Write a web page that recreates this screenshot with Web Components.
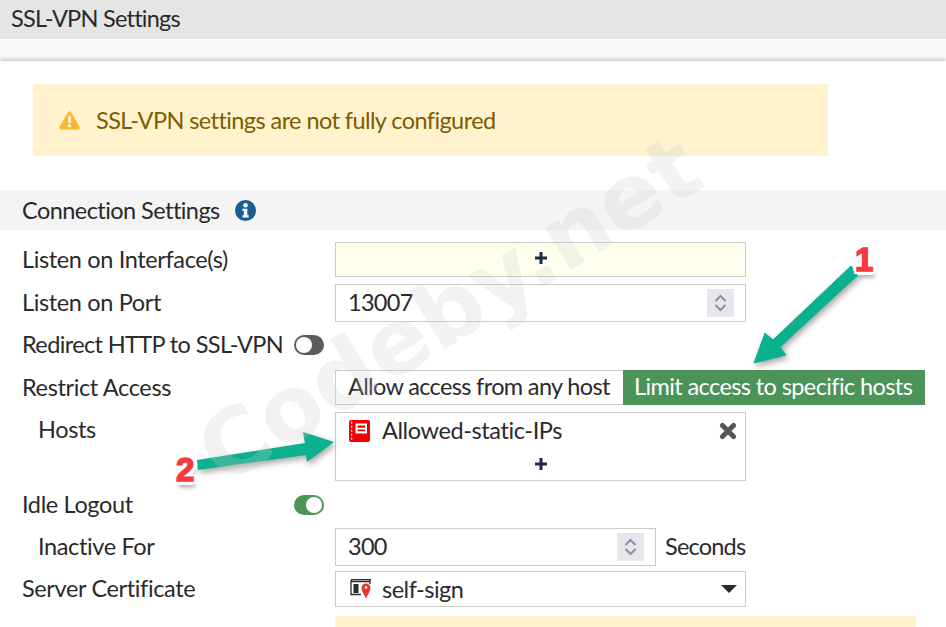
<!DOCTYPE html>
<html>
<head>
<meta charset="utf-8">
<title>SSL-VPN Settings</title>
<style>
    html, body { margin: 0; padding: 0; background: #fff; }
    body {
        width: 946px; height: 627px; overflow: hidden; position: relative;
        font: 23.5px/1.2 Lato, "Liberation Sans", sans-serif; color: #2a2a2a;
        letter-spacing: -0.55px;
    }
</style>
</head>
<body>
<title-bar>SSL-VPN Settings</title-bar>
<settings-panel>
    <warning-box>SSL-VPN settings are not fully configured</warning-box>
    <section-header>Connection Settings</section-header>

    <form-row label="Listen on Interface(s)" top="12" height="35"><entry-field empty></entry-field></form-row>
    <form-row label="Listen on Port" top="7" height="38"><number-field value="13007"></number-field></form-row>
    <form-row label="Redirect HTTP to SSL-VPN" tight top="5" height="36"><toggle-switch slot="aside"></toggle-switch></form-row>
    <form-row label="Restrict Access" top="7" height="35"><segment-buttons></segment-buttons></form-row>
    <form-row label="Hosts" top="7" height="69" indent align="start"><entry-field name="Allowed-static-IPs"></entry-field></form-row>
    <form-row label="Idle Logout" top="7" height="34"><toggle-switch slot="aside" on></toggle-switch></form-row>
    <form-row label="Inactive For" top="6" height="38" indent><number-field value="300" width="321" unit="Seconds"></number-field></form-row>
    <form-row label="Server Certificate" top="5" height="36"><select-field>self-sign</select-field></form-row>
    <form-row top="9" height="30"><notice-strip></notice-strip></form-row>
</settings-panel>
<image-marks></image-marks>

<script>
// Barra gris del título
class TitleBar extends HTMLElement {
    constructor() {
        super();
        this.attachShadow({ mode: 'open' });
        this.shadowRoot.innerHTML = `
            <style>
                :host {
                    display: flex; align-items: center; height: 37px; padding: 0 0 2px 11px;
                    background: #e5e5e5; color: #2a2a2a; letter-spacing: -0.74px;
                }
            </style>
            <slot></slot>
        `;
    }
}

// Panel blanco con la sombra superior
class SettingsPanel extends HTMLElement {
    constructor() {
        super();
        this.attachShadow({ mode: 'open' });
        this.shadowRoot.innerHTML = `
            <style>
                :host {
                    display: block; padding-top: 22px;
                    background: #fafafa;
                }
                .sheet {
                    display: flex; flex-direction: column; padding-top: 23px; background: #fff;
                    box-shadow: 0 -2px 4px rgba(0,0,0,.2);
                }
                ::slotted(*) { flex: none; }
            </style>
            <div class="sheet"><slot></slot></div>
        `;
    }
}

class WarningBox extends HTMLElement {
    constructor() {
        super();
        this.attachShadow({ mode: 'open' });
        this.shadowRoot.innerHTML = `
            <style>
                :host {
                    display: flex; align-items: center; gap: 16px; width: 795px; height: 72px;
                    margin-left: 33px; padding-left: 26px; box-sizing: border-box;
                    background: #fff2cc; color: #7b5d00; letter-spacing: -0.58px;
                }
                svg { width: 21px; height: 20px; flex: none; }
            </style>
            <svg viewBox="0 0 21 20">
                <path fill="#f8b932" d="M10.500 1.200c.7 0 1.200.4 1.600 1l8.400 14.600c.7 1.200-.1 2.700-1.600 2.700H2.100C.6 19.500-.2 18 .5 16.800L8.900 2.200c.4-.6.900-1 1.600-1z"/>
                <rect x="9.100" y="6" width="2.800" height="6.800" fill="#fff2cc"/>
                <rect x="9.100" y="14.300" width="2.800" height="2.800" fill="#fff2cc"/>
            </svg>
            <slot></slot>
        `;
    }
}

class SectionHeader extends HTMLElement {
    constructor() {
        super();
        this.attachShadow({ mode: 'open' });
        this.shadowRoot.innerHTML = `
            <style>
                :host {
                    display: flex; align-items: center; gap: 15px; height: 40px; margin-top: 34px;
                    padding-left: 22px; background: #f4f4f4; letter-spacing: -0.55px;
                }
                svg { width: 21px; height: 21px; flex: none; }
            </style>
            <slot></slot>
            <svg viewBox="0 0 21 21">
                <circle cx="10.500" cy="10.500" r="10.500" fill="#1b5f92"/>
                <circle cx="10.500" cy="5.300" r="2.300" fill="#fff"/>
                <path fill="#fff" d="M7.500 8.800h4.800v6.400h1.400v2.200H7.500v-2.200h1.400v-4.200H7.500z"/>
            </svg>
        `;
    }
}

// Fila del formulario: etiqueta a la izquierda, control en un slot
class FormRow extends HTMLElement {
    constructor() {
        super();
        this.attachShadow({ mode: 'open' });
    }

    connectedCallback() {
        const indent = this.hasAttribute('indent');
        const start = this.getAttribute('align') === 'start';
        const height = Number(this.getAttribute('height') || 35);
        const lift = height % 2 === 0 ? 2 : 0;
        this.shadowRoot.innerHTML = `
            <style>
                :host {
                    display: grid; grid-template-columns: 335px 1fr; align-items: center;
                    margin-top: ${this.getAttribute('top') || 0}px;
                    height: ${height}px;
                }
                .label {
                    display: flex; align-items: center; justify-content: space-between;
                    padding: ${start ? 3 : 0}px 11px ${lift}px ${indent ? 38 : 22}px; white-space: nowrap;
                    align-self: ${start ? 'start' : 'center'};
                    letter-spacing: ${this.hasAttribute('tight') ? -0.62 : -0.36}px;
                }
                ::slotted([slot=aside]) { margin-top: ${lift}px; }
                .control { display: flex; height: 100%; align-items: center; min-width: 0; }
            </style>
            <div class="label"><span>${this.getAttribute('label') || ''}</span><slot name="aside"></slot></div>
            <div class="control"><slot></slot></div>
        `;
    }
}

class ToggleSwitch extends HTMLElement {
    constructor() {
        super();
        this.attachShadow({ mode: 'open' });
    }

    connectedCallback() {
        const on = this.hasAttribute('on');
        this.shadowRoot.innerHTML = `
            <style>
                :host {
                    display: block; position: relative; width: 30px; height: 20px;
                    box-sizing: border-box; border-radius: 10px; background: ${on ? '#4d9459' : '#5c5c5c'};
                }
                i {
                    position: absolute; top: 2px; ${on ? 'right: 2px' : 'left: 2px'};
                    width: 16px; height: 16px; border-radius: 50%; background: #fff;
                }
            </style>
            <i></i>
        `;
    }
}

class NumberField extends HTMLElement {
    constructor() {
        super();
        this.attachShadow({ mode: 'open' });
    }

    connectedCallback() {
        const unit = this.getAttribute('unit');
        this.shadowRoot.innerHTML = `
            <style>
                :host { display: flex; align-items: center; gap: 9px; height: 100%; }
                .box {
                    display: flex; align-items: center; justify-content: space-between;
                    width: ${this.getAttribute('width') || 411}px; height: 100%; box-sizing: border-box;
                    border: 1px solid #cbcbcb; padding: 0 11px 0 12px; background: #fff;
                }
                .value { padding-bottom: 2px; letter-spacing: -0.7px; }
                .spin {
                    display: flex; align-items: center; justify-content: center;
                    width: 27px; height: 28px; background: #e7e6ec;
                }
                svg { width: 15px; height: 20px; }
                .unit { padding-bottom: 2px; letter-spacing: -0.8px; }
            </style>
            <div class="box">
                <span class="value">${this.getAttribute('value')}</span>
                <div class="spin">
                    <svg viewBox="0 0 15 20" fill="none" stroke="#8f8d9c" stroke-width="2">
                        <path d="M2.500 8l5-5 5 5M2.500 12l5 5 5-5"/>
                    </svg>
                </div>
            </div>
            ${unit ? `<span class="unit">${unit}</span>` : ''}
        `;
    }
}

// Campo de objetos: vacío (amarillo) o con una entrada y el botón +
class EntryField extends HTMLElement {
    constructor() {
        super();
        this.attachShadow({ mode: 'open' });
    }

    connectedCallback() {
        const name = this.getAttribute('name');
        const empty = this.hasAttribute('empty');
        const plus = `
            <svg class="plus" viewBox="0 0 12 12"><path fill="#1c2a44" d="M4.500 0h3v4.500H12v3H7.500V12h-3V7.500H0v-3h4.500z"/></svg>
        `;
        this.shadowRoot.innerHTML = `
            <style>
                :host {
                    display: flex; flex-direction: column; width: 411px; height: 100%; box-sizing: border-box;
                    border: 1px solid #cbcbcb; background: ${empty ? '#ffffee' : '#fff'};
                }
                .plus { width: 12px; height: 12px; }
                .add {
                    display: flex; flex: 1; align-items: center; justify-content: center;
                    padding-bottom: ${empty ? 3 : 0}px;
                }
                .entry { display: flex; align-items: center; height: 35px; padding: 0 8px 0 13px; gap: 12px; letter-spacing: -0.4px; }
                .entry span { flex: 1; }
                .book { width: 21px; height: 22px; }
                .x { width: 18px; height: 18px; }
            </style>
            ${name ? `
                <div class="entry">
                    <svg class="book" viewBox="0 0 21 22">
                        <rect x="0" y="0" width="21" height="22" rx="2" fill="#f00000"/>
                        <path fill="none" stroke="#fff" stroke-width="1" stroke-dasharray="2.500 1.500" d="M2.700 1.500v19"/>
                        <path fill="#fff" d="M6.500 3.500h11.500v10H6.500z"/>
                        <path fill="#f00000" d="M8.500 5.500h7.500v2.200H8.500zM8.500 9.500h7.500v1.800H8.500z"/>
                    </svg>
                    <span>${name}</span>
                    <svg class="x" viewBox="0 0 18 18">
                        <path fill="none" stroke="#555" stroke-width="5" stroke-linecap="round" d="M3.500 3.500l11 11M14.500 3.500l-11 11"/>
                    </svg>
                </div>
            ` : ''}
            <div class="add">${plus}</div>
        `;
    }
}

class SegmentButtons extends HTMLElement {
    constructor() {
        super();
        this.attachShadow({ mode: 'open' });
        this.shadowRoot.innerHTML = `
            <style>
                :host { display: flex; height: 100%; white-space: nowrap; }
                div { display: flex; align-items: center; box-sizing: border-box; padding-bottom: 2px; }
                .off { width: 288px; padding-left: 12px; border: 1px solid #cbcbcb; border-right: 0; letter-spacing: -0.65px; }
                .on { width: 302px; padding-left: 11px; background: #4b9358; color: #fff; letter-spacing: -0.6px; }
            </style>
            <div class="off">Allow access from any host</div>
            <div class="on">Limit access to specific hosts</div>
        `;
    }
}

class SelectField extends HTMLElement {
    constructor() {
        super();
        this.attachShadow({ mode: 'open' });
        this.shadowRoot.innerHTML = `
            <style>
                :host {
                    display: flex; align-items: center; gap: 10px; width: 411px; height: 100%;
                    box-sizing: border-box; border: 1px solid #cbcbcb; padding: 0 8px 0 14px;
                    letter-spacing: -0.5px;
                }
                .cert { width: 22px; height: 24px; flex: none; }
                .label { flex: 1; }
                .caret { width: 16px; height: 8px; flex: none; }
            </style>
            <svg class="cert" viewBox="0 0 22 24">
                <path fill="none" stroke="#2b2b2b" stroke-width="1.300" d="M1 4.500h18.500M1 3v14.500h10M20 3v4"/>
                <path fill="#2b2b2b" d="M1 2h20v1.300H1zM3.500 7h5v9h-5z"/>
                <path fill="#e33a2c" d="M16 6.500a4.500 4.500 0 0 1 4.500 4.500c0 3-2.500 6.500-4.500 10.500-2-4-4.500-7.500-4.500-10.500A4.500 4.500 0 0 1 16 6.500z"/>
                <circle cx="16" cy="10.500" r="1.300" fill="#fff"/>
            </svg>
            <span class="label"><slot></slot></span>
            <svg class="caret" viewBox="0 0 16 8"><path fill="#2b2b2b" d="M0 0h16L8 8z"/></svg>
        `;
    }
}

class NoticeStrip extends HTMLElement {
    constructor() {
        super();
        this.attachShadow({ mode: 'open' });
        this.shadowRoot.innerHTML = `
            <style>:host { display: block; width: 581px; height: 100%; background: #fff2cc; }</style>
        `;
    }
}

// Marcas añadidas sobre la captura: flechas, números y marca de agua
class ImageMarks extends HTMLElement {
    constructor() {
        super();
        this.attachShadow({ mode: 'open' });
        this.shadowRoot.innerHTML = `
            <style>
                :host { position: absolute; inset: 0; display: block; pointer-events: none; overflow: hidden; letter-spacing: 0; }
                svg { position: absolute; left: 0; top: 0; filter: drop-shadow(2px 3px 3px rgba(0,0,0,.35)); }
                .num {
                    position: absolute; font: 700 33px/1 "Liberation Sans", sans-serif; color: #f8383f;
                    -webkit-text-stroke: 1.500px #f8383f;
                    text-shadow: 4px 0 0 #fff, -4px 0 0 #fff, 0 4px 0 #fff, 0 -4px 0 #fff,
                        3px 3px 0 #fff, -3px 3px 0 #fff, 3px -3px 0 #fff, -3px -3px 0 #fff,
                        2px 6px 4px rgba(0,0,0,.4);
                }
                .mark {
                    position: absolute; left: 231px; top: 409px; white-space: nowrap;
                    font: 700 90px/1 "DejaVu Sans", sans-serif; color: rgba(205,205,205,.25);
                    transform-origin: 0 100%; transform: rotate(-32deg);
                }
            </style>
            <svg width="946" height="627" viewBox="0 0 946 627">
                <path fill="#0bb08f" stroke="#0bb08f" stroke-linejoin="round" d="M851 266 859 274 780 347 786 355 754 363 765 333 773 340z"/>
                <path fill="#0bb08f" d="M197 460 305 443 303 432 334 442 307 462 306 455 198 470z"/>
            </svg>
            <span class="num" style="left:855px;top:243px">1</span>
            <span class="num" style="left:176px;top:453px">2</span>
            <div class="mark">Codeby.net</div>
        `;
    }
}

customElements.define('title-bar', TitleBar);
customElements.define('settings-panel', SettingsPanel);
customElements.define('warning-box', WarningBox);
customElements.define('section-header', SectionHeader);
customElements.define('form-row', FormRow);
customElements.define('toggle-switch', ToggleSwitch);
customElements.define('number-field', NumberField);
customElements.define('entry-field', EntryField);
customElements.define('segment-buttons', SegmentButtons);
customElements.define('select-field', SelectField);
customElements.define('notice-strip', NoticeStrip);
customElements.define('image-marks', ImageMarks);
</script>
</body>
</html>
